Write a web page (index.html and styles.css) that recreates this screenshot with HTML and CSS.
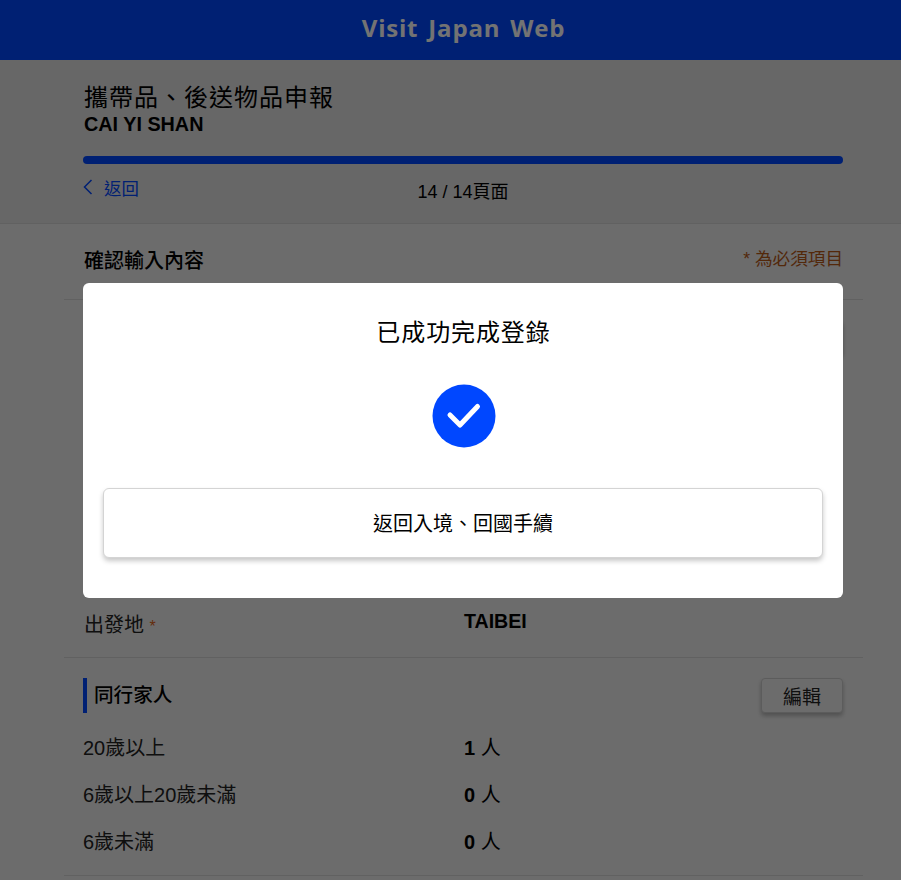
FILE: index.html
```html
<!DOCTYPE html>
<html lang="zh-Hant">
<head>
<meta charset="utf-8">
<title>Visit Japan Web</title>
<link rel="stylesheet" href="styles.css">
</head>
<body>
<header class="topbar">Visit Japan Web</header>
<section class="intro">
  <h1 class="intro-title">攜帶品、後送物品申報</h1>
  <div class="intro-name">CAI YI SHAN</div>
  <div class="progress"></div>
  <div class="pager">
    <a class="back">
      <svg class="back-icon" width="10" height="16" viewBox="0 0 10 16"><path d="M8.5 1 1.5 8l7 7" fill="none" stroke="#0047ff" stroke-width="1.5"/></svg>
      返回
    </a>
    <div class="pager-count">14 / 14頁面</div>
  </div>
</section>
<main class="content">
  <div class="confirm-head">
    <h2 class="confirm-title">確認輸入內容</h2>
    <div class="required-note">* 為必須項目</div>
  </div>
  <div class="panel panel-hidden">
    <div class="group-head">
      <h3 class="group-title">基本資料</h3>
      <button class="edit">編輯</button>
    </div>
  </div>
  <div class="panel panel-origin">
    <div class="row row-origin">
      <div class="label origin-label">出發地 <span class="star">*</span></div>
      <div class="value origin-value">TAIBEI</div>
    </div>
  </div>
  <div class="panel">
    <div class="group-head">
      <h3 class="group-title">同行家人</h3>
      <button class="edit">編輯</button>
    </div>
    <div class="row"><div class="label">20歲以上</div><div class="value"><b>1</b> 人</div></div>
    <div class="row"><div class="label">6歲以上20歲未滿</div><div class="value"><b>0</b> 人</div></div>
    <div class="row"><div class="label">6歲未滿</div><div class="value"><b>0</b> 人</div></div>
  </div>
</main>
<div class="overlay">
  <div class="modal">
    <h2 class="modal-title">已成功完成登錄</h2>
    <svg class="modal-check" width="64" height="64" viewBox="0 0 64 64">
      <circle cx="32" cy="32" r="31.5" fill="#0047ff"/>
      <path d="M18 31 28 41 45.5 22.5" fill="none" stroke="#fff" stroke-width="5" stroke-linecap="round" stroke-linejoin="round"/>
    </svg>
    <button class="modal-button">返回入境、回國手續</button>
  </div>
</div>
</body>
</html>
```
FILE: styles.css
```css
* { box-sizing: border-box; }
html, body { margin: 0; height: 880px; overflow: hidden; }
body {
  background: #f0f0f0;
  color: #000;
  font-family: "Liberation Sans", "Noto Sans CJK TC", sans-serif;
  font-size: 18px;
}
h1, h2, h3 { margin: 0; font-weight: 400; }
.topbar {
  height: 60px;
  padding-left: 26px;
  background: #0047ff;
  color: #fff;
  font-family: "Open Sans", sans-serif;
  font-weight: 700;
  font-size: 24px;
  letter-spacing: .8px;
  word-spacing: 3px;
  line-height: 56px;
  text-align: center;
}
.intro {
  height: 164px;
  background: #e4e4e4;
  border-bottom: 1px solid #d8d8d8;
  padding: 23px 58px 0 83px;
}
.intro-title { font-size: 24px; line-height: 30px; letter-spacing: 1px; padding-left: 1px; }
.intro-name { font-size: 19.8px; line-height: 24px; font-weight: 700; padding-left: 1px; margin-top: -1px; }
.progress { height: 8px; margin-top: 20px; border-radius: 4px; background: #0047ff; }
.pager { position: relative; height: 40px; margin-top: 9px; }
.back { display: flex; align-items: center; gap: 11px; height: 28px; color: #0047ff; font-size: 17.4px; }
.pager-count {
  position: absolute; left: 0; right: 0; top: 6px;
  text-align: center; font-size: 18px; line-height: 26px;
}
.content { padding: 0 38px 0 64px; }
.confirm-head {
  display: flex; justify-content: space-between;
  height: 76px;
  border-bottom: 1px solid #d8d8d8;
  padding: 23px 20px 0 20px;
}
.confirm-title { font-size: 20px; line-height: 29px; font-weight: 500; }
.required-note { font-size: 17.6px; line-height: 24px; color: #b85a18; }
.panel { border-bottom: 1px solid #d8d8d8; padding: 0 20px 0 19px; }
.panel-hidden { display: flow-root; height: 300px; border-bottom: 0; }
.panel-origin { height: 58px; }
.row-origin { height: 57px; }
.group-head {
  display: flex; justify-content: space-between; align-items: center;
  height: 35px; margin-top: 20px;
}
.group-title {
  border-left: 4px solid #0047ff;
  padding-left: 7px;
  height: 35px;
  font-size: 19.6px;
  line-height: 34px;
  font-weight: 500;
}
.edit {
  width: 82px; height: 35px;
  border: 1px solid #ccc; border-radius: 4px;
  background: #f0f0f0;
  font: inherit; font-size: 19px; color: #222;
  box-shadow: 0 3px 4px rgba(0,0,0,.25);
  padding: 0;
}
.row { display: grid; grid-template-columns: 381px 1fr; height: 47px; line-height: 26px; }
.panel > .group-head + .row { margin-top: 22px; }
.panel > .row:last-child { height: 46px; }
.label { font-size: 20px; color: #222; }
.value { font-size: 20px; }
.value b { font-weight: 700; }
.origin-label { padding-left: 1px; padding-top: 12px; }
.origin-value { font-weight: 700; font-size: 19.6px; padding-top: 8px; }
.star { color: #e0641a; font-size: 16px; }
.overlay {
  position: fixed; inset: 0;
  background: rgba(0,0,0,.55);
  padding: 283px 58px 0 83px;
}
.modal {
  display: flex; flex-direction: column; align-items: center;
  height: 315px;
  background: #fff;
  border-radius: 6px;
  padding: 33px 20px 0;
}
.modal-title { font-size: 24px; line-height: 34px; letter-spacing: .9px; padding-left: 1px; }
.modal-check { margin-top: 34px; margin-left: 1px; display: block; }
.modal-button {
  width: 100%; height: 70px;
  margin-top: 40px;
  background: #fff;
  border: 1px solid #d4d4d4;
  border-radius: 6px;
  box-shadow: 0 3px 5px rgba(0,0,0,.22);
  font: inherit; font-size: 20px; color: #000;
  padding: 0 0 2px;
}
```
